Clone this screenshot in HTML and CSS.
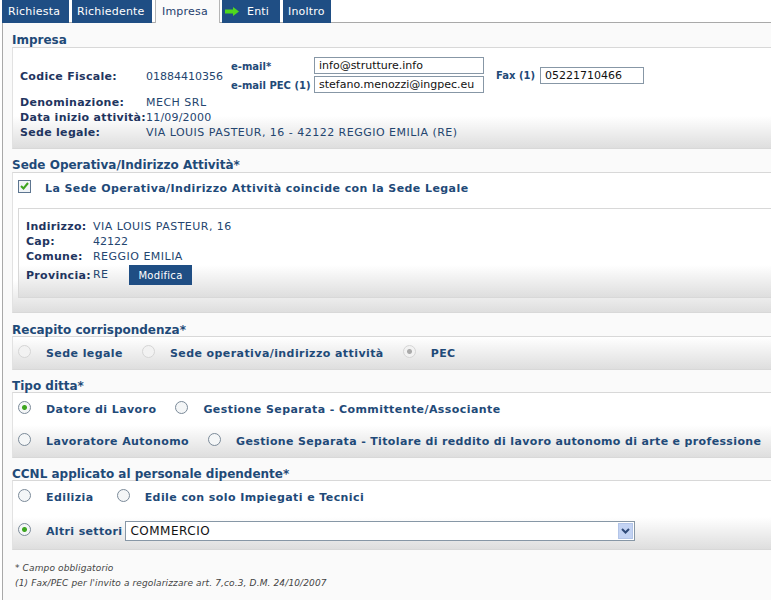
FILE: index.html
```html
<!DOCTYPE html>
<html lang="it">
<head>
  <meta charset="UTF-8">
  <title>Impresa</title>
  <link rel="stylesheet" href="styles.css">
</head>
<body>
  <div class="tabs">
    <a class="tab tab-richiesta">Richiesta</a>
    <a class="tab tab-richiedente">Richiedente</a>
    <a class="tab tab-impresa active">Impresa</a>
    <a class="tab tab-enti">
      <svg class="arrow" width="14" height="9" viewBox="0 0 14 9"><path d="M0 2.500h8V0l6 4.500L8 9V6.500H0z" fill="#4fd81e"/></svg>
      Enti
    </a>
    <a class="tab tab-inoltro">Inoltro</a>
  </div>

  <div class="panel">
    <h2>Impresa</h2>
    <div class="box box-impresa">
      <div class="row-cf">
        <span class="lbl lbl-main cf-text">Codice Fiscale:</span>
        <span class="val val-num val-cf cf-text">01884410356</span>
        <div class="mails">
          <div class="mail-row"><label class="lbl lbl-mail">e-mail*</label><input class="field" value="info@strutture.info"></div>
          <div class="mail-row"><label class="lbl lbl-mail">e-mail PEC (1)</label><input class="field" value="stefano.menozzi@ingpec.eu"></div>
        </div>
        <label class="lbl lbl-fax">Fax (1)</label>
        <input class="field field-fax" value="05221710466">
      </div>
      <div class="row"><span class="lbl lbl-main">Denominazione:</span><span class="val">MECH SRL</span></div>
      <div class="row"><span class="lbl lbl-main">Data inizio attività:</span><span class="val val-date">11/09/2000</span></div>
      <div class="row"><span class="lbl lbl-main">Sede legale:</span><span class="val">VIA LOUIS PASTEUR, 16 - 42122 REGGIO EMILIA (RE)</span></div>
    </div>

    <h2>Sede Operativa/Indirizzo Attività*</h2>
    <div class="box box-sede">
      <div class="coincide">
        <span class="check"><svg width="9" height="8" viewBox="0 0 9 8"><path d="M1 4l2.500 2.500L8 1" fill="none" stroke="#3da51f" stroke-width="2"/></svg></span>
        <span class="opt">La Sede Operativa/Indirizzo Attività coincide con la Sede Legale</span>
      </div>
      <div class="inner">
        <div class="row-in"><span class="lbl lbl-in">Indirizzo:</span><span class="val">VIA LOUIS PASTEUR, 16</span></div>
        <div class="row-in"><span class="lbl lbl-in">Cap:</span><span class="val val-num">42122</span></div>
        <div class="row-in"><span class="lbl lbl-in">Comune:</span><span class="val">REGGIO EMILIA</span></div>
        <div class="row-prov"><span class="lbl lbl-in">Provincia:</span><span class="val val-re">RE</span><button class="btn">Modifica</button></div>
      </div>
    </div>

    <h2 class="h-low">Recapito corrispondenza*</h2>
    <div class="box box-recapito">
      <div class="radios">
        <input type="radio" class="radio" disabled><span class="opt opt-a">Sede legale</span>
        <input type="radio" class="radio" disabled><span class="opt opt-a">Sede operativa/indirizzo attività</span>
        <input type="radio" class="radio" checked disabled><span class="opt">PEC</span>
      </div>
    </div>

    <h2 class="h-low h-near">Tipo ditta*</h2>
    <div class="box box-ditta">
      <div class="radios">
        <input type="radio" class="radio" name="ditta" checked><span class="opt opt-a">Datore di Lavoro</span>
        <input type="radio" class="radio" name="ditta"><span class="opt">Gestione Separata - Committente/Associante</span>
      </div>
      <div class="radios">
        <input type="radio" class="radio" name="ditta"><span class="opt opt-a">Lavoratore Autonomo</span>
        <input type="radio" class="radio" name="ditta"><span class="opt opt-long">Gestione Separata - Titolare di reddito di lavoro autonomo di arte e professione</span>
      </div>
    </div>

    <h2 class="h-low h-near">CCNL applicato al personale dipendente*</h2>
    <div class="box box-ccnl">
      <div class="radios">
        <input type="radio" class="radio" name="ccnl"><span class="opt opt-c">Edilizia</span>
        <input type="radio" class="radio" name="ccnl"><span class="opt">Edile con solo Impiegati e Tecnici</span>
      </div>
      <div class="radios radios-sel">
        <input type="radio" class="radio" name="ccnl" checked><span class="opt opt-long">Altri settori</span>
        <div class="select">
          <span>COMMERCIO</span>
          <span class="select-btn"><svg width="9" height="6" viewBox="0 0 9 6"><path d="M1 1l3.500 3.500L8 1" fill="none" stroke="#2f4a78" stroke-width="2"/></svg></span>
        </div>
      </div>
    </div>

    <div class="notes">
      <p>* Campo obbligatorio</p>
      <p>(1) Fax/PEC per l'invito a regolarizzare art. 7,co.3, D.M. 24/10/2007</p>
    </div>
  </div>
</body>
</html>
```

FILE: styles.css
```css
* {
  box-sizing: border-box;
  margin: 0;
  padding: 0;
}

html, body {
  height: 600px;
  overflow: hidden;
}

body {
  font-family: "DejaVu Sans", Verdana, sans-serif;
  font-size: 11px;
  color: #1f3f6e;
  background-color: #fff;
}

.tabs {
  display: flex;
  height: 23px;
  padding-left: 2px;
  gap: 3px;
}

.tab {
  height: 23px;
  background-color: #1f4e84;
  color: #fff;
  display: flex;
  align-items: center;
  gap: 8px;
  padding-left: 6px;
  letter-spacing: 0.2px;
}

.tab-richiesta { width: 67px; }
.tab-richiedente { width: 80px; padding-left: 5px; }
.tab-impresa { width: 65px; margin-right: -1px; }
.tab-enti { width: 58px; padding-left: 3px; }
.tab-inoltro { width: 48px; padding-left: 5px; }

.tab.active {
  background-color: #fafafa;
  color: #1f3f6e;
  border-left: 1px solid #b5b5b5;
  border-right: 1px solid #b5b5b5;
  position: relative;
  z-index: 1;
}

.panel {
  border-left: 1px solid #a9a9a9;
  border-top: 1px solid #a9a9a9;
  margin-left: 2px;
  margin-top: -1px;
  height: 578px;
  background-color: #fafafa;
  padding-left: 9px;
}

h2 {
  font-size: 12px;
  font-weight: bold;
  color: #1f4a78;
  line-height: 18px;
  height: 16px;
  margin-top: 7px;
}

.panel > h2:first-child {
  margin-top: 8px;
}

.h-low {
  line-height: 20px;
}

.h-near {
  margin-top: 6px;
}

.box {
  border-top: 1px solid #d8d8d8;
  border-left: 1px solid #e2e2e2;
  border-bottom: 1px solid #d8d8d8;
  background: linear-gradient(to bottom, #fff calc(100% - 32px), #dedede 100%);
}

.box-impresa {
  height: 102px;
  padding: 8px 0 0 7px;
}

.row-cf {
  display: flex;
  align-items: center;
  height: 38px;
  margin-bottom: 1px;
}

.cf-text {
  margin-top: 2px;
}

.row {
  display: flex;
  height: 15px;
  line-height: 15px;
}

.lbl {
  font-weight: bold;
  color: #1f3560;
  letter-spacing: 0.3px;
}

.lbl-main {
  width: 126px;
  flex: none;
  white-space: nowrap;
}

.val {
  color: #24456f;
  white-space: nowrap;
  letter-spacing: 0.48px;
}

.val-num {
  letter-spacing: 0;
}

.val-date {
  letter-spacing: 0.2px;
}

.val-cf {
  width: 85px;
}

.mails {
  width: 253px;
}

.mail-row {
  display: flex;
  align-items: center;
  justify-content: space-between;
  height: 19px;
}

.lbl-mail {
  font-size: 10px;
  color: #1f4a78;
  letter-spacing: 0;
  margin-top: 2px;
}

.field {
  width: 170px;
  height: 17px;
  border: 1px solid #8797a6;
  background: #fff;
  font-family: "DejaVu Sans", Verdana, sans-serif;
  font-size: 11px;
  color: #111;
  padding: 0 4px;
}

.lbl-fax {
  font-size: 10px;
  color: #1f4a78;
  letter-spacing: 0;
  margin-left: 12px;
  margin-right: 5px;
}

.field-fax {
  width: 104px;
}

.box-sede {
  height: 141px;
  padding: 0 0 0 5px;
}

.coincide {
  display: flex;
  align-items: center;
  height: 35px;
  padding-bottom: 4px;
}

.check {
  width: 13px;
  height: 13px;
  border: 1px solid #5d7590;
  background: #f0f4f7;
  display: flex;
  align-items: center;
  justify-content: center;
  margin-right: 14px;
  margin-top: -5px;
}

.opt {
  font-weight: bold;
  color: #1f4a78;
  white-space: nowrap;
  letter-spacing: 0.42px;
}

.opt-long {
  letter-spacing: 0.35px;
}

.inner {
  height: 90px;
  border: 1px solid #d8d8d8;
  border-right: none;
  background: linear-gradient(to bottom, #fff calc(100% - 32px), #dedede 100%);
  padding: 10px 0 0 7px;
}

.row-in {
  display: flex;
  height: 15px;
  line-height: 15px;
}

.lbl-in {
  width: 67px;
}

.row-prov {
  display: flex;
  align-items: center;
  height: 22px;
}

.val-re {
  margin-top: -2px;
  width: 36px;
}

.btn {
  width: 63px;
  height: 20px;
  background-color: #1f4e84;
  color: #fff;
  border: none;
  font-family: "DejaVu Sans", Verdana, sans-serif;
  font-size: 10px;
  letter-spacing: 0.3px;
}

.box-recapito {
  height: 34px;
}

.radios {
  display: flex;
  align-items: center;
  height: 32px;
  padding-left: 5px;
}

.radio {
  appearance: none;
  width: 13px;
  height: 13px;
  border-radius: 50%;
  border: 1px solid #7b8a99;
  background: #f4f6f7;
  margin-right: 15px;
  flex: none;
  position: relative;
  top: -2px;
}

.radio:checked {
  background: radial-gradient(circle, #3da51f 0 2px, #f4f6f7 3px);
}

.radio:disabled {
  border-color: #d5d5d5;
  background: #f2f2f2;
}

.radio:disabled:checked {
  background: radial-gradient(circle, #aaa 0 2px, #f2f2f2 3px);
}

.opt-a {
  margin-right: 19px;
}

.opt-c {
  margin-right: 23px;
}

.box-ditta {
  height: 66px;
}

.box-ccnl {
  height: 70px;
}

.radios-sel {
  height: 36px;
}

.select {
  width: 510px;
  height: 20px;
  margin-left: 3px;
  border: 1px solid #8797a6;
  background: #fff;
  color: #111;
  font-size: 12px;
  letter-spacing: 0.5px;
  display: flex;
  align-items: center;
  justify-content: space-between;
  padding-left: 4px;
}

.select-btn {
  width: 15px;
  height: 16px;
  margin-right: 1px;
  background: #c3d3f3;
  border: 1px solid #b3c5e8;
  display: flex;
  align-items: center;
  justify-content: center;
}

.notes {
  margin-top: 11px;
  margin-left: 3px;
  font-size: 9px;
  font-style: italic;
  letter-spacing: 0.13px;
  color: #444;
}

.notes p {
  height: 15px;
  line-height: 15px;
}
```
